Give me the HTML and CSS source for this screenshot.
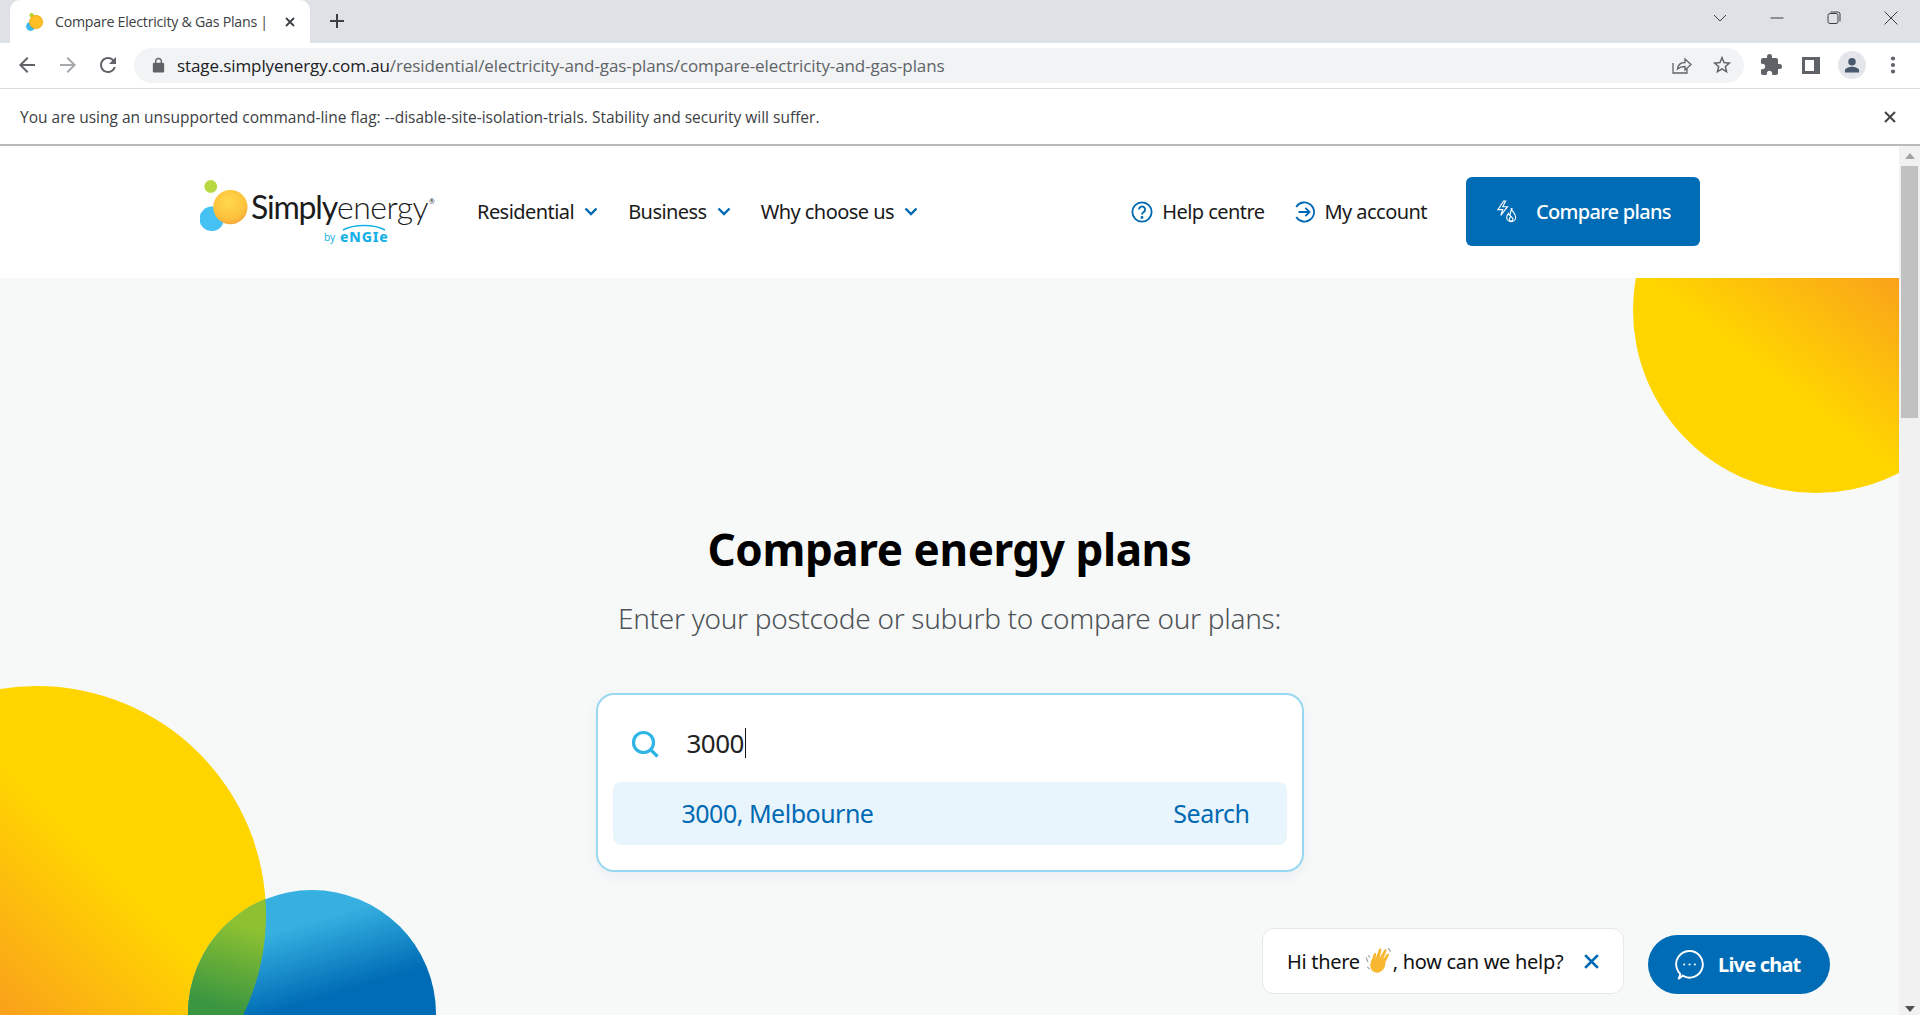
FILE: index.html
```html
<!DOCTYPE html>
<html lang="en">
<head>
<meta charset="utf-8">
<title>Compare Electricity &amp; Gas Plans</title>
<link rel="stylesheet" href="styles.css">
</head>
<body>
<div class="tabstrip">
  <div class="tab">
    <svg class="favicon" viewBox="0 0 18 18"><circle cx="6" cy="3" r="2" fill="#b5d334"/><circle cx="5" cy="13" r="4" fill="#3db8ee"/><circle cx="10" cy="9" r="6" fill="#fbbf24" stroke="#f59e0b" stroke-width=".6"/></svg>
    <span class="tab-title">Compare Electricity &amp; Gas Plans |</span>
    <svg class="tab-close" viewBox="0 0 12 12"><path d="M2 2l8 8M10 2l-8 8"/></svg>
  </div>
  <svg class="new-tab" viewBox="0 0 16 16"><path d="M8 1v14M1 8h14"/></svg>
  <div class="win-controls">
    <svg class="win-icon" viewBox="0 0 16 16"><path d="M2 5l6 6 6-6"/></svg>
    <svg class="win-icon" viewBox="0 0 16 16"><path d="M1.5 8h13"/></svg>
    <svg class="win-icon" viewBox="0 0 16 16"><rect x="2" y="3.5" width="10" height="10" rx="2"/><path d="M4.5 2h7.5a2 2 0 0 1 2 2v7.5"/></svg>
    <svg class="win-icon" viewBox="0 0 16 16"><path d="M1.5 1.5l13 13M14.5 1.5l-13 13"/></svg>
  </div>
</div>

<div class="toolbar">
  <svg class="tb-icon" viewBox="0 0 24 24"><path d="M20 11H7.83l5.59-5.59L12 4l-8 8 8 8 1.41-1.41L7.83 13H20v-2z"/></svg>
  <svg class="tb-icon tb-dim" viewBox="0 0 24 24"><path d="M4 11h12.17l-5.59-5.59L12 4l8 8-8 8-1.41-1.41L16.17 13H4v-2z"/></svg>
  <svg class="tb-icon" viewBox="0 0 24 24"><path d="M17.65 6.35A7.958 7.958 0 0 0 12 4c-4.42 0-7.99 3.58-7.99 8s3.57 8 7.99 8c3.73 0 6.84-2.55 7.73-6h-2.08A5.99 5.99 0 0 1 12 18c-3.31 0-6-2.69-6-6s2.69-6 6-6c1.66 0 3.14.69 4.22 1.78L13 11h7V4l-2.35 2.35z"/></svg>
  <div class="omnibox">
    <svg class="lock" viewBox="0 0 24 24"><path fill-rule="evenodd" d="M18 8h-1V6c0-2.76-2.24-5-5-5S7 3.24 7 6v2H6c-1.1 0-2 .9-2 2v10c0 1.1.9 2 2 2h12c1.1 0 2-.9 2-2V10c0-1.1-.9-2-2-2zM9 6c0-1.66 1.34-3 3-3s3 1.34 3 3v2H9V6z"/></svg>
    <span class="url"><span class="url-host">stage.simplyenergy.com.au</span>/residential/electricity-and-gas-plans/compare-electricity-and-gas-plans</span>
    <svg class="omni-share" viewBox="0 0 20 20"><path d="M1 8v10h14v-4M5.5 14c.5-4 3.500-6.500 7.500-6.500V4l6 5.500-6 5.500v-3.500c-3 0-5.500.7-7.500 2.500z"/></svg>
    <svg class="omni-star" viewBox="0 0 24 24"><path d="M22 9.240l-7.190-.62L12 2 9.190 8.630 2 9.240l5.460 4.730L5.820 21 12 17.270 18.180 21l-1.630-7.030L22 9.240zM12 15.400l-3.760 2.270 1-4.280-3.320-2.880 4.380-.38L12 6.100l1.710 4.040 4.380.38-3.320 2.880 1 4.280L12 15.400z"/></svg>
  </div>
  <div class="tb-right">
    <svg class="tb-icon" viewBox="0 0 24 24"><path d="M20.500 11H19V7c0-1.100-.9-2-2-2h-4V3.500a2.500 2.500 0 0 0-5 0V5H4c-1.100 0-1.990.9-1.990 2v3.800H3.500c1.490 0 2.700 1.210 2.700 2.700s-1.210 2.700-2.700 2.700H2V20c0 1.100.9 2 2 2h3.800v-1.500c0-1.490 1.210-2.700 2.700-2.700 1.490 0 2.700 1.210 2.700 2.700V22H17c1.100 0 2-.9 2-2v-4h1.500a2.500 2.500 0 0 0 0-5z"/></svg>
    <svg class="tb-icon" viewBox="0 0 24 24"><path fill-rule="evenodd" d="M3 4h18v17H3zM6 7v11h9V7z"/></svg>
    <div class="avatar"><svg viewBox="0 0 24 24"><circle cx="12" cy="8" r="4.500"/><path d="M3.500 21v-2.500c0-3 5.500-4.500 8.500-4.500s8.500 1.500 8.500 4.500V21z"/></svg></div>
    <svg class="tb-icon" viewBox="0 0 24 24"><circle cx="12" cy="5.500" r="2.100"/><circle cx="12" cy="12" r="2.100"/><circle cx="12" cy="18.500" r="2.100"/></svg>
  </div>
</div>

<div class="infobar">
  <span>You are using an unsupported command-line flag: --disable-site-isolation-trials. Stability and security will suffer.</span>
  <svg class="info-close" viewBox="0 0 12 12"><path d="M1 1l10 10M11 1L1 11"/></svg>
</div>

<div class="viewport">
  <div class="page">
    <header class="site-header">
      <a class="logo">
        <svg class="logo-mark" viewBox="0 0 52 64"><defs><radialGradient id="sun" cx=".45" cy=".35" r=".7"><stop offset="0" stop-color="#ffd84d"/><stop offset=".7" stop-color="#fdc23c"/><stop offset="1" stop-color="#f5a33c"/></radialGradient></defs><circle cx="11" cy="8" r="6.500" fill="#b7d840"/><circle cx="12" cy="41" r="12.500" fill="#45c1f4"/><circle cx="31" cy="29" r="17.500" fill="url(#sun)"/></svg>
        <div class="logo-text">
          <div class="logo-word"><span class="logo-simply">Simply</span><span class="logo-energy">energy</span><sup class="logo-reg">®</sup></div>
          <div class="logo-by">
            <span>by</span>
            <span class="logo-engie">eNGIe<svg class="engie-arc" viewBox="0 0 44 7"><path d="M1 6C12 0 32 0 43 6"/></svg></span>
          </div>
        </div>
      </a>
      <nav class="main-nav">
        <a class="nav-link">Residential<svg class="chev" viewBox="0 0 14 9"><path d="M1.500 1.500L7 7l5.500-5.500"/></svg></a>
        <a class="nav-link">Business<svg class="chev" viewBox="0 0 14 9"><path d="M1.500 1.500L7 7l5.500-5.500"/></svg></a>
        <a class="nav-link">Why choose us<svg class="chev" viewBox="0 0 14 9"><path d="M1.500 1.500L7 7l5.500-5.500"/></svg></a>
      </nav>
      <div class="header-right">
        <a class="util-link"><svg class="util-icon" viewBox="0 0 24 24"><circle cx="12" cy="12" r="10.500"/><path d="M8.800 9.300a3.300 3.300 0 1 1 5 2.800c-1.100.7-1.800 1.300-1.800 2.700"/><circle class="dot" cx="12" cy="18" r=".6"/></svg>Help centre</a>
        <a class="util-link"><svg class="util-icon" viewBox="0 0 24 24"><path d="M3.500 6.500a10.500 10.500 0 1 1 0 11M6 12h12M13.500 7.500L18 12l-4.500 4.500"/></svg>My account</a>
        <a class="cta"><svg class="cta-icon" viewBox="0 0 24 24"><path d="M8 1L2 10h5l-2 6 7-9H7l3-6zM16 9c.5 3 4.500 4.500 4.500 9a4.700 4.700 0 0 1-9.400 0c0-2 1-3 1.900-4 .2 1.500 1 2 1.500 2 .6-2 .5-4.500 2-7zM15.800 22c-1.500 0-2-1-2-2s1.200-1.700 1.700-3c.8 1 2.200 1.800 2.200 3s-.6 2-1.900 2z"/></svg>Compare plans</a>
      </div>
    </header>

    <main class="hero">
      <svg class="bubble-top" viewBox="1633 278 266 215">
        <defs><linearGradient id="gTop" gradientUnits="userSpaceOnUse" x1="1767" y1="370" x2="1865" y2="244"><stop offset="0" stop-color="#ffd500"/><stop offset="1" stop-color="#f9a01b"/></linearGradient></defs>
        <circle cx="1816" cy="310" r="183" fill="url(#gTop)"/>
      </svg>
      <svg class="bubble-bottom" viewBox="0 684 440 331">
        <defs>
          <linearGradient id="gYellow" gradientUnits="userSpaceOnUse" x1="133" y1="897" x2="7" y2="1023"><stop offset="0" stop-color="#ffd500"/><stop offset="1" stop-color="#f9a01b"/></linearGradient>
          <linearGradient id="gBlue" gradientUnits="userSpaceOnUse" x1="300" y1="925" x2="322" y2="998"><stop offset="0" stop-color="#35b0e0"/><stop offset="1" stop-color="#006cb5"/></linearGradient>
          <linearGradient id="gGreen" gradientUnits="userSpaceOnUse" x1="240" y1="925" x2="215" y2="1005"><stop offset="0" stop-color="#8dc132"/><stop offset="1" stop-color="#3a9640"/></linearGradient>
          <clipPath id="clipYellow"><circle cx="37" cy="915" r="229"/></clipPath>
        </defs>
        <circle cx="37" cy="915" r="229" fill="url(#gYellow)"/>
        <circle cx="312" cy="1014" r="124" fill="url(#gBlue)"/>
        <circle cx="312" cy="1014" r="124" fill="url(#gGreen)" clip-path="url(#clipYellow)"/>
      </svg>

      <h1 class="hero-title">Compare energy plans</h1>
      <p class="hero-sub">Enter your postcode or suburb to compare our plans:</p>
      <div class="search-card">
        <div class="search-input">
          <svg class="search-icon" viewBox="0 0 28 28"><circle cx="12.500" cy="12.500" r="10"/><path d="M19.500 19.500l7 7"/></svg>
          <span class="search-value">3000</span><span class="caret"></span>
        </div>
        <div class="search-result">
          <span>3000, Melbourne</span>
          <span>Search</span>
        </div>
      </div>

      <div class="chat">
        <div class="chat-card">
          <span>Hi there</span>
          <svg class="wave" viewBox="0 0 24 24"><path fill="#f7b731" d="M5 13l2.500-7c.4-1.300 2.200-.9 2.100.4L9 10l3-8c.5-1.300 2.400-.7 2.100.6L12.500 9.500l4-7c.7-1.200 2.400-.4 1.900.9L15.500 10.500l3.300-4.500c.8-1.100 2.300-.1 1.700 1.100L17.500 13c-.3 2 0 3-.8 4.500-1.800 3.700-5.700 5.500-8.700 4C5 20 3.800 16.500 5 13z"/><path fill="none" stroke="#9aa0a6" stroke-width="1" d="M1 9l1.500 4M3 7l1 2M2 17l2 2M20 1l2 3"/></svg>
          <span class="chat-rest">, how can we help?</span>
          <svg class="chat-close" viewBox="0 0 16 16"><path d="M2 2l12 12M14 2L2 14"/></svg>
        </div>
        <a class="chat-btn">
          <svg class="chat-icon" viewBox="0 0 30 30"><path d="M5 28c1.500-.5 3-2 4-3a12.500 12.500 0 1 0-5.300-6.500c.7 2 1.800 3.500 3 4.800C6.800 25 6 27 5 28z"/><circle class="dot" cx="10.500" cy="14.500" r="1"/><circle class="dot" cx="15.500" cy="14.500" r="1"/><circle class="dot" cx="20.500" cy="14.500" r="1"/></svg>
          Live chat
        </a>
      </div>
    </main>
  </div>
  <div class="scrollbar">
    <span class="sb-up"></span>
    <div class="sb-track"><div class="sb-thumb"></div></div>
    <span class="sb-down"></span>
  </div>
</div>
</body>
</html>
```

FILE: styles.css
```css
* { box-sizing: border-box; }
html, body { margin: 0; height: 1020px; overflow: hidden; background: #fff; }
body { display: flex; flex-direction: column; font-family: "Noto Sans", "Open Sans", sans-serif; color: #1a1a1a; }
svg { display: block; flex: none; }

.tabstrip { height: 43px; flex: none; background: #dee1e6; display: flex; align-items: flex-end; padding-left: 10px; position: relative; }
.tab { width: 300px; height: 43px; background: #fff; border-radius: 10px 10px 0 0; display: flex; align-items: center; padding-left: 15px; }
.favicon { width: 20px; height: 20px; }
.tab-title { margin-left: 10px; font-family: "Open Sans", sans-serif; font-size: 14.200px; letter-spacing: -.25px; color: #3c4043; width: 220px; white-space: nowrap; overflow: hidden; }
.tab-close { width: 12px; height: 12px; margin-left: 9px; fill: none; stroke: #3c4043; stroke-width: 1.800; }
.new-tab { width: 16px; height: 16px; margin: 0 0 14px 19px; fill: none; stroke: #3c4043; stroke-width: 2; }
.win-controls { margin-left: auto; height: 100%; display: flex; align-items: center; gap: 41px; padding: 0 21px 7px 0; }
.win-icon { width: 16px; height: 16px; fill: none; stroke: #3c4043; stroke-width: 1; }

.toolbar { height: 46px; flex: none; background: #fff; border-bottom: 1px solid #dadce0; display: flex; align-items: center; padding: 0 15px 1px 15px; }
.tb-icon { width: 24px; height: 24px; fill: #5f6368; }
.toolbar > .tb-icon { margin-right: 16px; }
.toolbar > .tb-icon:nth-child(1) { margin-right: 17px; }
.toolbar > .tb-icon:nth-child(3) { margin-right: 14px; }
.tb-dim { fill: #a5a8ac; }
.omnibox { width: 1615px; height: 35px; background: #f1f3f4; border-radius: 18px; display: flex; align-items: center; padding: 0 11px 0 16px; }
.lock { width: 17px; height: 17px; fill: #5f6368; }
.url { margin-left: 10px; font-family: "Open Sans", sans-serif; font-size: 17px; letter-spacing: -.1px; color: #5f6368; white-space: nowrap; }
.url-host { color: #202124; }
.omni-share { width: 20px; height: 20px; margin-left: auto; fill: none; stroke: #5f6368; stroke-width: 1.300; }
.omni-star { width: 22px; height: 22px; margin-left: 19px; fill: #5f6368; }
.tb-right { display: flex; align-items: center; gap: 16px; margin-left: 15px; }
.avatar { width: 28px; height: 28px; margin: 0 -1px; border-radius: 50%; background: #e4e6eb; display: flex; align-items: center; justify-content: center; }
.avatar svg { width: 20px; height: 20px; fill: #4a5870; }

.infobar { height: 57px; flex: none; background: #fff; border-bottom: 2px solid #b9b9b9; display: flex; align-items: center; justify-content: space-between; padding: 0 24px 0 20px; font-family: "Open Sans", sans-serif; font-size: 15.500px; color: #3c4043; }
.info-close { width: 12px; height: 12px; fill: none; stroke: #444; stroke-width: 2; }

.viewport { height: 869px; flex: none; display: flex; }
.page { flex: 1; min-width: 0; display: flex; flex-direction: column; position: relative; overflow: hidden; }

.scrollbar { width: 21px; flex: none; background: #f1f1f1; display: flex; flex-direction: column; align-items: center; }
.sb-up, .sb-down { height: 20px; flex: none; width: 100%; position: relative; }
.sb-up::after, .sb-down::after { content: ""; position: absolute; left: 6px; border-left: 5px solid transparent; border-right: 5px solid transparent; }
.sb-up::after { top: 7px; border-bottom: 6px solid #a3a3a3; }
.sb-down::after { bottom: 3px; border-top: 6px solid #505050; }
.sb-track { flex: 1; width: 100%; padding: 0 2px; }
.sb-thumb { height: 252px; background: #c1c1c1; }

.site-header { height: 132px; flex: none; background: #fff; display: flex; align-items: center; padding: 0 199px 1px 200px; }
.logo { display: flex; width: 235px; height: 68px; align-items: flex-start; }
.logo-mark { width: 51px; height: 64px; }
.logo-text { display: flex; flex-direction: column; }
.logo-word { display: flex; align-items: baseline; font-family: "Lato", sans-serif; font-size: 32px; line-height: 34px; margin-top: 12px; color: #1c1c1c; white-space: nowrap; }
.logo-simply { font-weight: 400; letter-spacing: -1.200px; }
.logo-energy { font-weight: 300; letter-spacing: -.5px; }
.logo-reg { font-size: 7px; line-height: 1; letter-spacing: 0; align-self: flex-start; margin: 8px 0 0 1px; }
.logo-by { display: flex; align-items: flex-end; gap: 5px; padding-left: 73px; height: 19px; font-size: 10px; line-height: 12px; color: #17b1e6; }
.logo-engie { position: relative; font-weight: 800; font-size: 14px; line-height: 13px; letter-spacing: .8px; }
.engie-arc { position: absolute; left: 2px; top: -6px; width: 44px; height: 7px; fill: none; stroke: #17b1e6; stroke-width: 1.600; }

.main-nav { display: flex; margin-left: 42px; gap: 30px; }
.nav-link { display: flex; align-items: center; gap: 10px; font-size: 20px; letter-spacing: -.55px; color: #1a1a1a; }
.chev { width: 14px; height: 9px; fill: none; stroke: #0069b4; stroke-width: 2.400; }

.header-right { margin-left: auto; display: flex; align-items: center; }
.util-link { display: flex; align-items: center; gap: 9px; font-size: 20px; letter-spacing: -.55px; margin-right: 29px; white-space: nowrap; }
.util-link + .util-link { margin-right: 39px; }
.util-icon { width: 22px; height: 22px; fill: none; stroke: #0069b4; stroke-width: 2; }
.dot { fill: #fff; stroke: none; }
.util-icon .dot { fill: #0069b4; stroke: #0069b4; }
.cta { width: 234px; height: 69px; background: #006cb5; border-radius: 6px; color: #fff; font-size: 20px; font-weight: 500; letter-spacing: -.7px; display: flex; align-items: center; padding-left: 30px; gap: 17px; white-space: nowrap; }
.cta-icon { width: 23px; height: 23px; fill: none; stroke: #fff; stroke-width: 1.200; }

.hero { flex: 1; position: relative; background: #f7f9f9; display: flex; flex-direction: column; align-items: center; padding-top: 239px; }
.bubble-top { position: absolute; right: 0; top: 0; width: 266px; height: 215px; }
.bubble-bottom { position: absolute; left: 0; bottom: 0; width: 440px; height: 331px; }
.hero-title { position: relative; margin: 0; font-size: 44px; line-height: 64px; font-weight: 700; color: #000; letter-spacing: -.4px; }
.hero-sub { position: relative; margin: 18px 0 0; font-size: 28px; line-height: 38px; font-weight: 300; letter-spacing: -.3px; color: #4f5356; }
.search-card { position: relative; width: 708px; height: 179px; margin-top: 56px; background: #fff; border: 2px solid #9ad8f2; border-radius: 18px; box-shadow: 0 4px 14px rgba(0, 60, 110, .06); padding: 0 15px; }
.search-input { height: 87px; display: flex; align-items: center; padding: 9px 0 0 18px; }
.search-icon { width: 28px; height: 28px; fill: none; stroke: #2fb4e6; stroke-width: 3.200; margin-top: 2px; }
.search-value { margin-left: 28px; font-size: 26px; letter-spacing: -.5px; color: #222; }
.caret { width: 1px; height: 30px; background: #111; margin-left: 1px; }
.search-result { height: 63px; background: #e9f5fc; border-radius: 8px; display: flex; align-items: center; justify-content: space-between; padding: 0 37px 2px 69px; font-size: 25px; letter-spacing: -.5px; color: #0069b4; }

.chat { position: absolute; right: 69px; bottom: 21px; display: flex; align-items: flex-end; gap: 24px; }
.chat-card { width: 362px; height: 66px; background: #fff; border: 1px solid #e6e8e8; border-radius: 12px; display: flex; align-items: center; padding-left: 24px; font-size: 20px; letter-spacing: -.3px; color: #111; white-space: nowrap; }
.wave { width: 28px; height: 28px; margin: 0 0 0 5px; }
.chat-close { width: 17px; height: 17px; margin-left: 20px; fill: none; stroke: #0069b4; stroke-width: 2.600; }
.chat-btn { width: 182px; height: 59px; background: #006cb5; border-radius: 30px; color: #fff; font-size: 20px; font-weight: 700; letter-spacing: -.8px; display: flex; align-items: center; padding-left: 25px; gap: 13px; white-space: nowrap; }
.chat-icon { width: 32px; height: 32px; fill: none; stroke: #fff; stroke-width: 1.800; }
```
